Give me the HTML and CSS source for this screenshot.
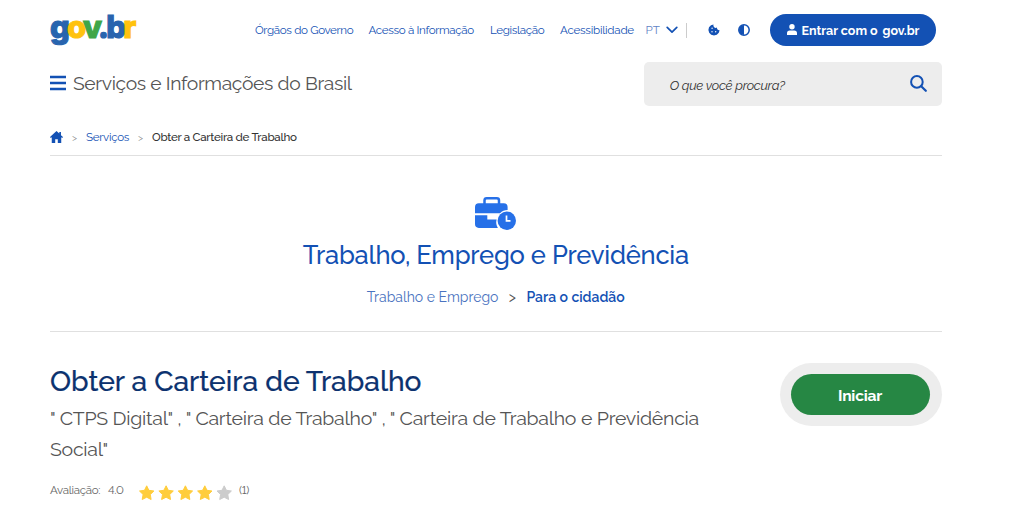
FILE: index.html
```html
<!DOCTYPE html>
<html lang="pt-br">
<head>
    <meta charset="UTF-8">
    <meta name="viewport" content="width=device-width, initial-scale=1.0">
    <title>Obter a Carteira de Trabalho</title>
    <link rel="stylesheet" href="styles.css">
</head>
<body>
    <div class="container">
        <header>
            <div class="topbar">
                <a class="logo" aria-label="gov.br"><span class="azul">g</span><span class="amarelo">o</span><span class="verde">v</span><span class="azul">.b</span><span class="amarelo">r</span></a>
                <nav class="links">
                    <a class="orgaos">Órgãos do Governo</a>
                    <a class="acesso">Acesso à Informação</a>
                    <a class="legislacao">Legislação</a>
                    <a class="acessibilidade">Acessibilidade</a>
                </nav>
                <div class="idioma">
                    <span>PT</span>
                    <svg width="12" height="8" viewBox="0 0 12 8"><path d="M1.2 1.3 6 6.1l4.8-4.8" fill="none" stroke="#1351b4" stroke-width="1.7" stroke-linecap="round" stroke-linejoin="round"/></svg>
                </div>
                <svg class="cookie" width="12" height="12" viewBox="0 0 12 12">
                    <path d="M5.5.5 3 1.2 1 3.3.4 6l.8 2.7 2 2 2.8.8 2.8-.8 2-2 .8-2.5A2.5 2.5 0 0 1 9 3.6 2.5 2.5 0 0 1 5.5.5z" fill="#1351b4"/>
                    <g fill="#fff"><circle cx="4.1" cy="4.2" r=".7"/><circle cx="4" cy="7.7" r=".7"/><circle cx="7.7" cy="7.8" r=".7"/></g>
                </svg>
                <svg class="contraste" width="12" height="12" viewBox="0 0 12 12"><circle cx="6" cy="6" r="5.2" fill="none" stroke="#1351b4" stroke-width="1.5"/><path d="M6 1v10A5 5 0 0 1 6 1z" fill="#1351b4"/></svg>
                <a class="entrar">
                    <svg width="10" height="11" viewBox="0 0 10 11"><circle cx="5" cy="2.8" r="2.7" fill="#fff"/><path d="M0 11V9.2A2.8 2.8 0 0 1 2.8 6.4h4.4A2.8 2.8 0 0 1 10 9.2V11z" fill="#fff"/></svg>
                    <span class="com">Entrar com o</span><span class="gov">gov.br</span>
                </a>
            </div>
            <div class="titulo-site">
                <svg width="16" height="16" viewBox="0 0 16 16"><path d="M0 2h16M0 8h16M0 14h16" stroke="#1351b4" stroke-width="2.4"/></svg>
                <span class="nome">Serviços e Informações do Brasil</span>
                <div class="busca">
                    <span>O que você procura?</span>
                    <svg width="17" height="17" viewBox="0 0 17 17"><circle cx="6.9" cy="6.9" r="5.8" fill="none" stroke="#1351b4" stroke-width="2"/><path d="m11.2 11.2 4.6 4.6" stroke="#1351b4" stroke-width="2.2" stroke-linecap="round"/></svg>
                </div>
            </div>
        </header>

        <div class="breadcrumb">
            <svg width="13" height="12" viewBox="0 0 14 12" preserveAspectRatio="none"><path d="M7 0 0 6.1l.8.9 1.1-.7V12h3.7V8.2h2.8V12h3.7V6.3l1.1.7.8-.9-2.2-1.9V.9H10v1.7z" fill="#1351b4"/></svg>
            <span class="seta">&gt;</span>
            <a class="servicos">Serviços</a>
            <span class="seta">&gt;</span>
            <strong>Obter a Carteira de Trabalho</strong>
        </div>

        <section class="categoria">
            <svg width="42" height="34" viewBox="0 0 42 34">
                <path d="M9.5 7V3.5Q9.5 1.3 11.7 1.3h10.1Q24 1.3 24 3.5V7" fill="none" stroke="#2670e8" stroke-width="2.5"/>
                <path d="M0 16.3V10q0-3.8 3.8-3.8h25q3.8 0 3.8 3.8v3.1a10.5 10.5 0 0 0-7.6 3.2z" fill="#2670e8"/>
                <path d="M0 18.3h12.3v4.2h9.3a10.5 10.5 0 0 0 1.3 8.4H3.8Q0 30.9 0 27.1z" fill="#2670e8"/>
                <circle cx="31.8" cy="23.7" r="9.2" fill="#2670e8"/>
                <path d="M31.5 18.5v5.3h4" fill="none" stroke="#fff" stroke-width="1.7"/>
            </svg>
            <h2>Trabalho, Emprego e Previdência</h2>
            <div class="caminho">
                <a class="emprego">Trabalho e Emprego</a>
                <span>&gt;</span>
                <a class="cidadao">Para o cidadão</a>
            </div>
        </section>

        <main class="servico">
            <div class="descricao">
                <h1>Obter a Carteira de Trabalho</h1>
                <p>" CTPS Digital" , " Carteira de Trabalho" , " Carteira de Trabalho e Previdência<br>Social"</p>
                <div class="avaliacao">
                    <span class="rotulo">Avaliação:</span>
                    <span class="nota">4.0</span>
                    <svg width="94" height="16" viewBox="0 0 94 16">
                        <defs><path id="estrela" d="m7.7.8 2.2 4.5 5 .7-3.6 3.5.8 5-4.4-2.3-4.5 2.3.9-5L.5 6l5-.7z" stroke-width="1" stroke-linejoin="round"/></defs>
                        <g fill="#ffcd3c" stroke="#ffcd3c">
                            <use href="#estrela"/>
                            <use href="#estrela" x="19.4"/>
                            <use href="#estrela" x="38.7"/>
                            <use href="#estrela" x="58.1"/>
                        </g>
                        <use href="#estrela" x="77.5" fill="#ccc" stroke="#ccc"/>
                    </svg>
                    <span class="total">(1)</span>
                </div>
            </div>
            <div class="acao"><button>Iniciar</button></div>
        </main>
    </div>
</body>
</html>
```
FILE: styles.css
```css
* {
    box-sizing: border-box;
}

body {
    margin: 0;
    background: #fff;
    color: #555;
    font-family: Raleway, Lato, sans-serif;
    font-variant-numeric: lining-nums;
    overflow: hidden;
}

svg {
    display: block;
    flex: none;
}

.container {
    width: 891.5px;
    margin-left: 50px;
    white-space: nowrap;
}

/* Barra superior */
.topbar {
    display: flex;
    align-items: center;
    height: 60px;
    color: #1351b4;
    font-size: 11.6px;
}

.logo {
    width: 205px;
    padding-bottom: 6px;
    font-family: Inter, sans-serif;
    font-size: 31px;
    font-weight: 800;
    line-height: 40px;
    letter-spacing: -2.8px;
    -webkit-text-stroke: 1.1px currentColor;
}

.azul { color: #2864ae; }
.amarelo { color: #ffc20e; }
.verde { color: #3fa648; }

.links {
    display: flex;
    letter-spacing: -0.34px;
}

.orgaos { width: 113.5px; }
.acesso { width: 121.5px; }
.legislacao { width: 70px; }
.acessibilidade {
    width: 85.5px;
    letter-spacing: -0.25px;
}

.idioma {
    display: flex;
    align-items: center;
    justify-content: space-between;
    width: 41.5px;
    height: 15px;
    padding-right: 8px;
    border-right: 1px solid #ccc;
    color: #5f83c5;
}

.cookie { margin-left: 21px; }
.contraste { margin-left: 18px; }

.entrar {
    display: flex;
    align-items: center;
    width: 166.5px;
    height: 32px;
    margin-left: 19.5px;
    padding-left: 17px;
    border-radius: 16px;
    background: #1351b4;
    color: #fff;
    font-size: 12.5px;
    font-weight: 700;
}

.entrar svg {
    margin-bottom: 2px;
}

.com {
    width: 81px;
    margin-left: 5px;
}

/* Titulo e busca */
.titulo-site {
    display: flex;
    align-items: center;
    height: 48px;
}

.titulo-site > svg {
    margin-bottom: 2px;
}

.nome {
    width: 571px;
    margin-left: 7px;
    padding-bottom: 1px;
    font-size: 19.3px;
    letter-spacing: -0.35px;
}

.busca {
    display: flex;
    align-items: center;
    justify-content: space-between;
    width: 298px;
    height: 44px;
    padding: 0 15px 2px 26px;
    border-radius: 5px;
    background: #ededed;
    color: #333;
    font-size: 13px;
    font-style: italic;
    letter-spacing: -0.25px;
}

.busca span {
    padding-top: 4px;
}

/* Breadcrumb */
.breadcrumb {
    display: flex;
    align-items: center;
    height: 48px;
    padding-top: 11px;
    border-bottom: 1px solid #e0e0e0;
    font-size: 11.6px;
    letter-spacing: -0.29px;
}

.seta {
    width: 23px;
    padding-left: 9px;
    color: #888;
    font-size: 10px;
}

.servicos {
    width: 43px;
    color: #1351b4;
}

.breadcrumb strong {
    color: #333;
    font-weight: 500;
}

/* Categoria */
.categoria {
    display: flex;
    flex-direction: column;
    align-items: center;
    height: 176px;
    padding-top: 41px;
    border-bottom: 1px solid #e0e0e0;
    color: #1351b4;
}

.categoria h2 {
    margin: 6px 0 0;
    font-size: 25.5px;
    font-weight: 500;
    line-height: 36px;
    letter-spacing: -0.23px;
}

.caminho {
    display: flex;
    margin-top: 14px;
    font-size: 14px;
    line-height: 20px;
}

.caminho span {
    width: 28px;
    text-align: center;
    color: #555;
}

.emprego { color: #4a73c0; }
.cidadao { font-weight: 600; }

/* Servico */
.servico {
    display: flex;
    justify-content: space-between;
    padding-top: 31px;
}

.servico h1 {
    margin: 0;
    color: #0c326f;
    font-size: 28.2px;
    font-weight: 500;
    line-height: 37px;
    -webkit-text-stroke: 0.2px currentColor;
}

.servico p {
    margin: 3px 0 0;
    font-size: 19.5px;
    line-height: 31px;
    letter-spacing: -0.26px;
}

.avaliacao {
    display: flex;
    align-items: center;
    margin-top: 18px;
    color: #666;
    font-size: 11.5px;
    letter-spacing: -0.3px;
}

.avaliacao span {
    padding-bottom: 5px;
}

.rotulo { width: 58px; }
.nota { width: 31px; }
.total { margin-left: 6px; }

.acao {
    width: 162px;
    height: 63px;
    padding: 11px;
    border-radius: 32px;
    background: #ededed;
}

.acao button {
    width: 139px;
    height: 41px;
    border: 0;
    border-radius: 21px;
    padding-top: 3px;
    background: #268744;
    color: #fff;
    font-family: inherit;
    font-size: 15.6px;
    font-weight: 700;
    letter-spacing: -0.2px;
}
```
